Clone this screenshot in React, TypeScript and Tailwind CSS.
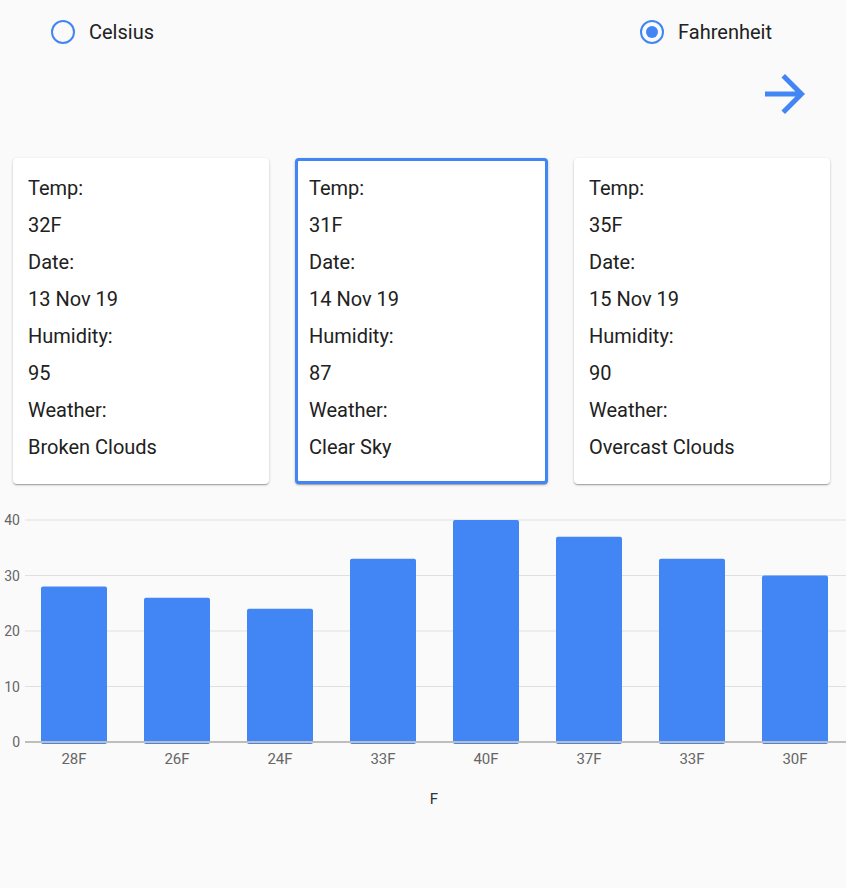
import { useState } from "react";

type Day = { temp: string; date: string; humidity: string; weather: string };

const days: Day[] = [
  { temp: "32F", date: "13 Nov 19", humidity: "95", weather: "Broken Clouds" },
  { temp: "31F", date: "14 Nov 19", humidity: "87", weather: "Clear Sky" },
  { temp: "35F", date: "15 Nov 19", humidity: "90", weather: "Overcast Clouds" },
];

const bars = [28, 26, 24, 33, 40, 37, 33, 30];

function Radio({ label, checked, onClick }: { label: string; checked: boolean; onClick: () => void }) {
  return (
    <button onClick={onClick} className="flex items-center gap-[14px] text-[20px] text-[#212121]">
      <span className="w-[24px] h-[24px] rounded-full border-2 border-[#4285f4] flex items-center justify-center">
        {checked && <span className="w-[12px] h-[12px] rounded-full bg-[#4285f4]" />}
      </span>
      <span>{label}</span>
    </button>
  );
}

function Chart() {
  // page y = svg y + 500
  const base = 242;
  const unit = 5.55;
  return (
    <svg width="846" height="320" className="block" style={{ fontFamily: "Roboto, sans-serif" }}>
      {[0, 10, 20, 30, 40].map((v) => {
        const y = base - v * unit;
        return (
          <g key={v}>
            {v > 0 && <line x1="25" x2="846" y1={y} y2={y} stroke="#e0e0e0" strokeWidth="1" />}
            <text x="20" y={y + 5} textAnchor="end" fontSize="14" fill="#666">
              {v}
            </text>
          </g>
        );
      })}
      {bars.map((v, i) => {
        const cx = 74 + i * 103;
        const h = v * unit;
        return (
          <g key={i}>
            <rect x={cx - 33} y={base - h} width="66" height={h + 2} rx="2" fill="#4285f4" />
            <text x={cx} y={base + 22} textAnchor="middle" fontSize="15" fill="#666">
              {v}F
            </text>
          </g>
        );
      })}
      <line x1="25" x2="846" y1={base} y2={base} stroke="#bdbdbd" strokeWidth="2" />
      <text x="434" y={base + 62} textAnchor="middle" fontSize="15" fill="#333">
        F
      </text>
    </svg>
  );
}

export default function App() {
  const [unit, setUnit] = useState<"C" | "F">("F");
  const [selected, setSelected] = useState(1);

  return (
    <div className="min-h-screen bg-[#fafafa] font-['Roboto',sans-serif] text-[#212121]">
      {/* unit toggle */}
      <div className="h-[64px] flex items-center justify-between pl-[51px] pr-[74px]">
        <Radio label="Celsius" checked={unit === "C"} onClick={() => setUnit("C")} />
        <Radio label="Fahrenheit" checked={unit === "F"} onClick={() => setUnit("F")} />
      </div>

      {/* next page arrow */}
      <div className="flex justify-end pr-[31px]">
        <svg width="60" height="60" viewBox="0 0 24 24" fill="#4285f4">
          <path d="M12 4l-1.41 1.41L16.17 11H4v2h12.17l-5.58 5.59L12 20l8-8z" />
        </svg>
      </div>

      {/* day cards */}
      <div className="flex gap-[26px] pl-[13px] mt-[34px]">
        {days.map((d, i) => (
          <div
            key={i}
            onClick={() => setSelected(i)}
            className={`${i === 1 ? "w-[253px] pl-[11px]" : "w-[256px] pl-[12px]"} bg-white rounded-[4px] border-[3px] pt-[9px] pb-[15px] pr-[12px] text-[20px] leading-[37px] shadow-[0_1px_3px_rgba(0,0,0,0.2),0_1px_1px_rgba(0,0,0,0.14),0_2px_1px_-1px_rgba(0,0,0,0.12)] ${
              selected === i ? "border-[#4285f4]" : "border-transparent"
            }`}
          >
            <div>Temp:</div>
            <div>{d.temp}</div>
            <div>Date:</div>
            <div>{d.date}</div>
            <div>Humidity:</div>
            <div>{d.humidity}</div>
            <div>Weather:</div>
            <div>{d.weather}</div>
          </div>
        ))}
      </div>

      {/* chart */}
      <div className="mt-[16px]">
        <Chart />
      </div>
    </div>
  );
}
